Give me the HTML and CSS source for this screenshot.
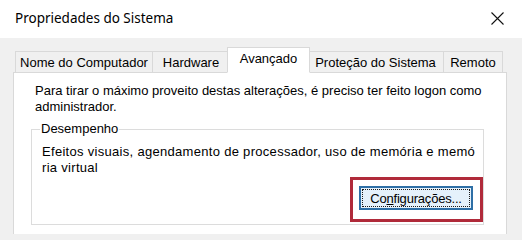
FILE: index.html
```html
<!DOCTYPE html>
<html lang="pt-BR">
<head>
<meta charset="utf-8">
<title>Propriedades do Sistema</title>
<link rel="stylesheet" href="styles.css">
</head>
<body>
<div class="window">
  <header class="titlebar">
    <span class="title">Propriedades do Sistema</span>
    <span class="close" aria-label="Fechar">
      <svg width="13" height="13" viewBox="0 0 13 13"><path d="M0.5 0.5 L12.5 12.5 M12.5 0.5 L0.5 12.5" stroke="#111" stroke-width="1.1" fill="none"/></svg>
    </span>
  </header>
  <div class="dialog">
    <div class="tabs">
      <div class="tab t1">Nome do Computador</div>
      <div class="tab t2">Hardware</div>
      <div class="tab t3 active">Avançado</div>
      <div class="tab t4">Proteção do Sistema</div>
      <div class="tab t5">Remoto</div>
    </div>
    <div class="panel">
      <p class="note">Para tirar o máximo proveito destas alterações, é preciso ter feito logon como<br>administrador.</p>
      <fieldset class="group">
        <legend>Desempenho</legend>
        <p class="group-text">Efeitos visuais, agendamento de processador, uso de memória e memó<br>ria virtual</p>
        <div class="actions">
          <span class="highlight">
            <button class="btn"><span class="focus">Co<u>n</u>figurações...</span></button>
          </span>
        </div>
      </fieldset>
    </div>
  </div>
</div>
</body>
</html>
```
FILE: styles.css
```css
html, body {
  margin: 0;
  padding: 0;
}
body {
  width: 522px;
  height: 234px;
  overflow: hidden;
  background: #f0f0f0;
  font-family: "Liberation Sans", Arial, sans-serif;
  font-size: 13px;
  color: #000;
}
.window {
  width: 522px;
  height: 234px;
  overflow: hidden;
}
.titlebar {
  height: 38px;
  background: #fff;
  display: flex;
  align-items: center;
  justify-content: space-between;
  padding: 0 18px 0 15px;
  box-sizing: border-box;
}
.title {
  font-family: "Noto Sans", "Open Sans", sans-serif;
  font-size: 13.5px;
  color: #000;
  margin-top: -2px;
}
.close {
  display: flex;
  margin-top: -1px;
}
.dialog {
  padding: 9px 15px 0 13px;
}
.tabs {
  display: flex;
  align-items: flex-end;
  height: 26px;
  padding-left: 2px;
  margin-bottom: -1px;
  position: relative;
  z-index: 1;
}
.tab {
  height: 22px;
  box-sizing: border-box;
  border: 1px solid #d9d9d9;
  background: #f0f0f0;
  display: flex;
  align-items: center;
  justify-content: center;
  margin-left: -1px;
  white-space: nowrap;
}
.tab:first-child { margin-left: 0; }
.t1 { width: 138px; }
.t2 { width: 78px; }
.t4 { width: 137px; }
.t5 { width: 60px; }
.tab.active {
  height: 26px;
  background: #fff;
  border-bottom-color: #fff;
  margin: 0 -2px 0 -3px;
  width: 83px;
  padding-bottom: 3px;
  position: relative;
  z-index: 2;
}
.tab.active + .tab { margin-left: -1px; }
.panel {
  background: #fff;
  border: 1px solid #d9d9d9;
  border-bottom: 0;
  box-sizing: border-box;
  height: 163px;
  padding: 10px 22px 0 17px;
}
.note {
  margin: 0 0 7px 4px;
  line-height: 16px;
}
.group {
  margin: 0;
  border: 1px solid #dcdcdc;
  padding: 0 0 2px 10px;
  min-width: 0;
}
.group legend {
  padding: 0 1px;
  margin-left: -2px;
  line-height: 14px;
}
.group-text {
  margin: 8px 0 0 0;
  line-height: 16px;
  letter-spacing: 0.3px;
}
.actions {
  display: flex;
  justify-content: flex-end;
  margin-top: 1px;
}
.highlight {
  display: inline-flex;
  border: 3px solid #b02a3a;
  padding: 6px 7px 9px 6px;
}
.btn {
  width: 114px;
  height: 24px;
  box-sizing: border-box;
  background: #e5f1fb;
  border: 2px solid #2e6fa6;
  padding: 1px;
  margin: 0;
  font-family: "Liberation Sans", Arial, sans-serif;
  font-size: 13px;
  color: #000;
  display: flex;
}
.focus {
  flex: 1;
  border: 1px dotted #1a1a1a;
  display: flex;
  align-items: center;
  justify-content: center;
  letter-spacing: -0.2px;
}
```
